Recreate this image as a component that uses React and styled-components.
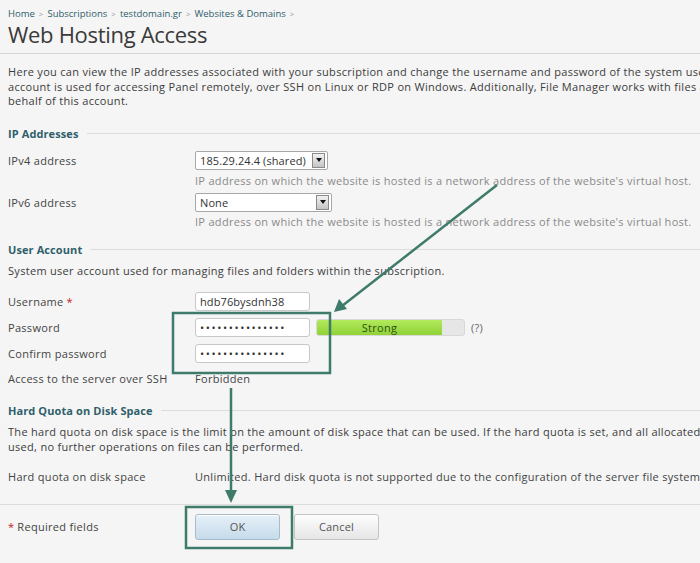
import React from 'react'
import styled, { createGlobalStyle } from 'styled-components'

const Global = createGlobalStyle`
  html, body { margin: 0; padding: 0; background: #f5f5f5; overflow: hidden; }
  body {
    font-family: "Open Sans", "DejaVu Sans", sans-serif;
    font-size: 11px;
    letter-spacing: 0.3px;
    color: #444;
  }
`

const Page = styled.div`
  position: relative;
  width: 1000px;
  height: 563px;
  white-space: nowrap;
`

const Header = styled.div`
  padding: 6px 8px 5px;
  border-bottom: 1px solid #d6d6d6;
`

const Crumbs = styled.div`
  display: flex;
  align-items: center;
  gap: 4px;
  height: 14px;
  font-size: 9.5px;
  letter-spacing: 0;
  color: #2f5d6b;
`

const Sep = styled.span`
  color: #999;
  font-size: 8px;
`

const Title = styled.h1`
  margin: 0;
  font-family: "Open Sans", sans-serif;
  font-weight: 400;
  font-size: 22px;
  line-height: 28px;
  color: #3a3a3a;
  letter-spacing: -0.3px;
`

const Body = styled.div`
  padding: 0 8px;
`

const Para = styled.p`
  margin: ${(p) => p.top || 0}px 0 0;
  line-height: ${(p) => p.lh || 14.5}px;
  color: #3c3c3c;
`

const Section = styled.div`
  display: flex;
  align-items: center;
  gap: 8px;
  margin-top: ${(p) => p.top}px;
  height: 14px;
  font-weight: 700;
  letter-spacing: 0.1px;
  color: #2f5f6b;
  &::after {
    content: '';
    flex: 1;
    height: 1px;
    background: #dcdcdc;
  }
`

const Row = styled.div`
  display: grid;
  grid-template-columns: 187px auto;
  align-items: start;
  margin-top: ${(p) => p.top || 0}px;
`

const Label = styled.div`
  line-height: ${(p) => p.h || 19}px;
  color: #444;
`

const Req = styled.span`
  color: #c0221e;
  margin-left: 3px;
`

const Field = styled.div`
  display: flex;
  flex-direction: column;
  gap: ${(p) => p.gap || 0}px;
`

const Inline = styled.div`
  display: flex;
  align-items: center;
  gap: 6px;
`

const Select = styled.div`
  box-sizing: border-box;
  width: ${(p) => p.w}px;
  height: 19px;
  display: flex;
  align-items: center;
  justify-content: space-between;
  padding: 0 2px 0 4px;
  background: #fff;
  border: 1px solid #a8a8a8;
  border-radius: 2px;
  color: #333;
  letter-spacing: 0.1px;
`

const Drop = styled.span`
  box-sizing: border-box;
  width: 13px;
  height: 15px;
  display: flex;
  align-items: center;
  justify-content: center;
  background: linear-gradient(#f2f2f2, #c4c4c4);
  border: 1px solid #8a8a8a;
  &::before {
    content: '';
    border-left: 3px solid transparent;
    border-right: 3px solid transparent;
    border-top: 4px solid #111;
  }
`

const Hint = styled.div`
  line-height: 14px;
  color: #8a8a8a;
`

const Input = styled.div`
  box-sizing: border-box;
  width: 115px;
  height: 19px;
  display: flex;
  align-items: center;
  padding: 0 4px;
  background: #fff;
  border: 1px solid #c8c8c8;
  border-radius: 3px;
  color: #333;
  font-size: 11px;
  letter-spacing: ${(p) => (p.secret ? '1.6px' : '0.1px')};
`

const Meter = styled.div`
  box-sizing: border-box;
  width: 149px;
  height: 17px;
  display: flex;
  background: #e6e6e6;
  border: 1px solid #d8d8d8;
  border-radius: 3px;
  overflow: hidden;
`

const MeterFill = styled.div`
  display: flex;
  align-items: center;
  justify-content: center;
  background: linear-gradient(#b2ea5c, #8fd236);
  color: #2b5410;
  font-size: 11px;
`

const Help = styled.span`
  color: #666;
`

const Value = styled.div`
  line-height: 19px;
  color: #444;
`

const Footer = styled.div`
  display: grid;
  grid-template-columns: 187px auto;
  align-items: center;
  margin-top: 18px;
  padding: 9px 8px 0;
  border-top: 1px solid #dcdcdc;
`

const Buttons = styled.div`
  display: flex;
  gap: 14px;
`

const Button = styled.button`
  box-sizing: border-box;
  width: 85px;
  height: 26px;
  font-family: inherit;
  font-size: 11px;
  letter-spacing: 0.2px;
  color: #555;
  border-radius: 3px;
  border: 1px solid ${(p) => (p.primary ? '#a6bccd' : '#c4c4c4')};
  background: ${(p) =>
    p.primary ? 'linear-gradient(#e6f0f8, #c6dbea)' : 'linear-gradient(#fdfdfd, #e6e6e6)'};
  box-shadow: inset 0 1px 0 #fff;
`

const Overlay = styled.svg`
  position: absolute;
  left: 0;
  top: 0;
  pointer-events: none;
`

const ink = '#3f7b6b'

export default function App() {
  const dots = '\u2022'.repeat(15)
  return (
    <Page>
      <Global />
      <Header>
        <Crumbs>
          <span>Home</span><Sep>&gt;</Sep>
          <span>Subscriptions</span><Sep>&gt;</Sep>
          <span>testdomain.gr</span><Sep>&gt;</Sep>
          <span>Websites &amp; Domains</span><Sep>&gt;</Sep>
        </Crumbs>
        <Title>Web Hosting Access</Title>
      </Header>
      <Body>
        <Para top={11}>
          Here you can view the IP addresses associated with your subscription and change the username and password of the system user. This
          <br />
          account is used for accessing Panel remotely, over SSH on Linux or RDP on Windows. Additionally, File Manager works with files and directories on
          <br />
          behalf of this account.
        </Para>

        <Section top={18}>IP Addresses</Section>
        <Row top={10}>
          <Label>IPv4 address</Label>
          <Field gap={4}>
            <Select w={133}><span>185.29.24.4 (shared)</span><Drop /></Select>
            <Hint>IP address on which the website is hosted is a network address of the website's virtual host.</Hint>
          </Field>
        </Row>
        <Row top={5}>
          <Label>IPv6 address</Label>
          <Field gap={3}>
            <Select w={137}><span>None</span><Drop /></Select>
            <Hint>IP address on which the website is hosted is a network address of the website's virtual host.</Hint>
          </Field>
        </Row>

        <Section top={14}>User Account</Section>
        <Para top={7} lh={14}>System user account used for managing files and folders within the subscription.</Para>
        <Row top={14}>
          <Label>Username<Req>*</Req></Label>
          <Input>hdb76bysdnh38</Input>
        </Row>
        <Row top={7}>
          <Label>Password</Label>
          <Inline>
            <Input secret>{dots}</Input>
            <Meter>
              <MeterFill style={{ width: '85%' }}>Strong</MeterFill>
            </Meter>
            <Help>(?)</Help>
          </Inline>
        </Row>
        <Row top={7}>
          <Label>Confirm password</Label>
          <Input secret>{dots}</Input>
        </Row>
        <Row top={6}>
          <Label>Access to the server over SSH</Label>
          <Value>Forbidden</Value>
        </Row>

        <Section top={16}>Hard Quota on Disk Space</Section>
        <Para top={6} lh={15}>
          The hard quota on disk space is the limit on the amount of disk space that can be used. If the hard quota is set, and all allocated disk space is
          <br />
          used, no further operations on files can be performed.
        </Para>
        <Row top={13}>
          <Label>Hard quota on disk space</Label>
          <Value>Unlimited. Hard disk quota is not supported due to the configuration of the server file system.</Value>
        </Row>
      </Body>
      <Footer>
        <Label>
          <Req style={{ marginLeft: 0, marginRight: 3 }}>*</Req>Required fields
        </Label>
        <Buttons>
          <Button primary>OK</Button>
          <Button>Cancel</Button>
        </Buttons>
      </Footer>

      <Overlay width="700" height="563" viewBox="0 0 700 563">
        <rect x="173" y="313" width="157" height="60" fill="none" stroke={ink} strokeWidth="2.5" />
        <rect x="186" y="507" width="106" height="41" fill="none" stroke={ink} strokeWidth="2.5" />
        <line x1="497" y1="185" x2="342" y2="306" stroke={ink} strokeWidth="2.5" />
        <polygon points="334,312 339,299 347,309" fill={ink} />
        <line x1="231" y1="388" x2="231" y2="492" stroke={ink} strokeWidth="2.5" />
        <polygon points="231,503 225,490 237,490" fill={ink} />
      </Overlay>
    </Page>
  )
}
